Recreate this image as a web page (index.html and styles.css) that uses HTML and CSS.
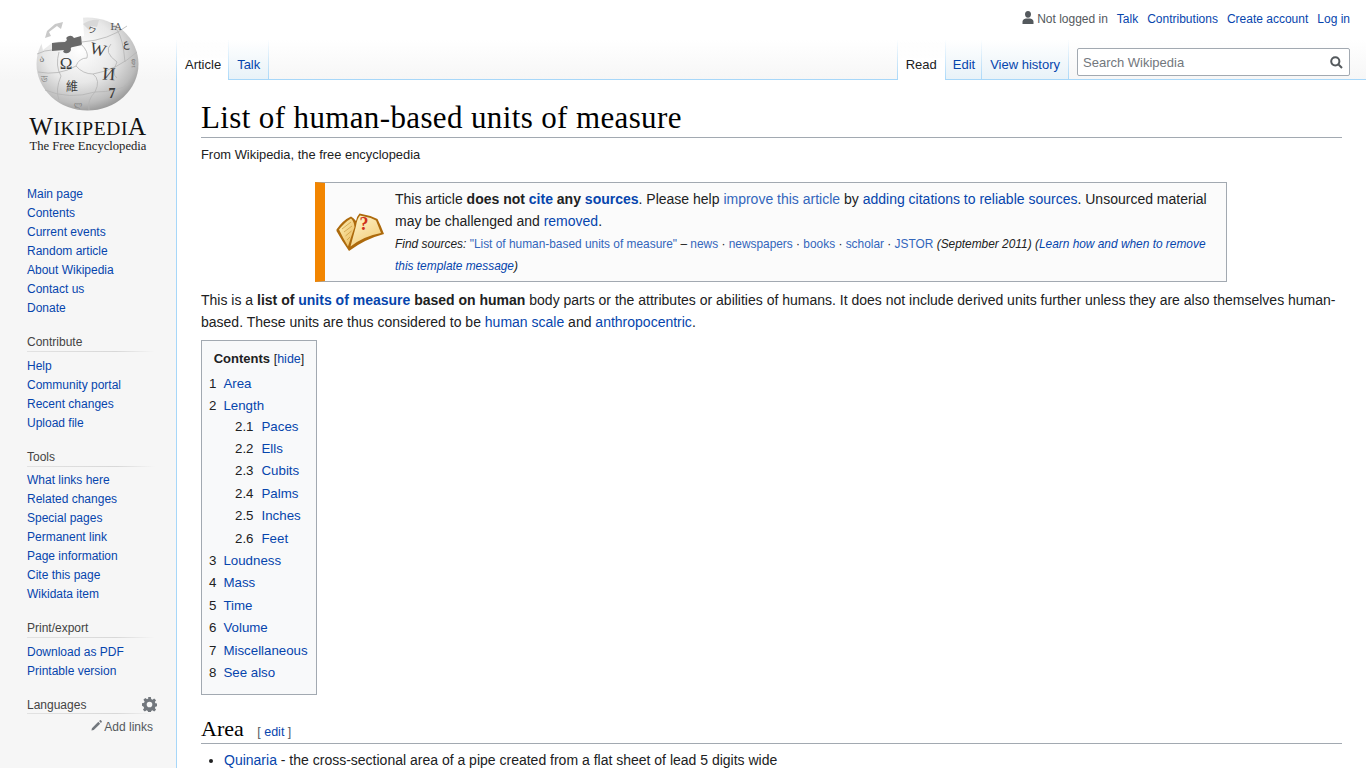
FILE: index.html
```html
<!DOCTYPE html>
<html lang="en">
<head>
    <meta charset="utf-8" />
    <title>List of human-based units of measure - Wikipedia</title>
    <link rel="stylesheet" href="styles.css">
</head>
<body>
<div class="page">
    <aside class="sidebar">
        <div class="logo">
            <svg class="globe" viewBox="37 17 104 94" width="104" height="94">
                <defs>
                    <radialGradient id="sphere" cx="42%" cy="35%" r="70%">
                        <stop offset="0" stop-color="#ffffff"/>
                        <stop offset="0.5" stop-color="#e8e8e8"/>
                        <stop offset="0.82" stop-color="#bcbcbc"/>
                        <stop offset="1" stop-color="#8e8e8e"/>
                    </radialGradient>
                </defs>
                <ellipse cx="88.500" cy="64" rx="51" ry="46.500" fill="url(#sphere)"/>
                <path d="M42 42 Q48 30 66 18 L84 17 L85 36 L53 43 L44 50Z" fill="#ffffff"/>
                <path d="M46 38 L52 36 L50 32 L58 26 L62 29 L64 22 L56 24 L48 31Z" fill="#c9c9c9"/>
                <path d="M84 24 Q92 19 100 20 L98 27 L92 26 L90 30Z" fill="#d8d8d8"/>
                <path d="M53 43 Q60 42 66 42 L68 40 Q66 37 70 36 Q73 35 75 38 L82 36 L83 45 L74 47 Q71 47 72 50 Q70 54 66 53 Q63 52 65 50 L53 51Z" fill="#6a6a6a"/>
                <g fill="none" stroke="#b4b4b4" stroke-width="0.8">
                    <path d="M38 54 Q46 50 53 50 M83 42 Q110 40 128 26"/>
                    <path d="M82 44 Q90 52 88 58 Q80 58 77 66 Q84 74 94 74 Q102 80 96 92 Q88 100 90 110"/>
                    <path d="M39 72 Q60 76 77 66 M94 74 Q118 70 138 52"/>
                    <path d="M60 52 Q56 66 62 76 Q56 90 60 100 M46 90 Q70 100 96 92 Q118 92 130 84"/>
                    <path d="M112 44 Q104 52 118 62 Q112 74 118 78 M118 30 Q124 38 126 62"/>
                </g>
                <g class="glyphs" fill="#3c3c3c" text-anchor="middle">
                    <text x="67" y="69" font-size="17">Ω</text>
                    <text x="99" y="55" font-size="17" transform="rotate(14 99 50)">W</text>
                    <text x="110" y="80" font-size="18" transform="rotate(4 110 73)">И</text>
                    <text class="glyph-cjk" x="73" y="91" font-size="12">維</text>
                    <text x="113" y="98" font-size="14" font-weight="bold">7</text>
                    <text class="glyph-cjk" x="93" y="33" font-size="8" transform="rotate(20 93 30)">ワ</text>
                    <text x="117" y="30" font-size="10" fill="#555">Ꙗ</text>
                    <text x="127" y="47" font-size="11">ع</text>
                    <text x="134" y="65" font-size="9" fill="#888">ฐ</text>
                    <text x="43" y="62" font-size="9" fill="#777">ა</text>
                    <text x="45" y="82" font-size="9" fill="#777">ড</text>
                    <text x="79" y="107" font-size="8" fill="#888">ლ</text>
                </g>
            </svg>
            <div class="wordmark">W<span class="wm-small">IKIPEDI</span>A</div>
            <div class="tagline">The Free Encyclopedia</div>
        </div>

        <nav class="portal portal-first">
            <a href="#">Main page</a>
            <a href="#">Contents</a>
            <a href="#">Current events</a>
            <a href="#">Random article</a>
            <a href="#">About Wikipedia</a>
            <a href="#">Contact us</a>
            <a href="#">Donate</a>
        </nav>
        <nav class="portal">
            <h3>Contribute</h3>
            <a href="#">Help</a>
            <a href="#">Community portal</a>
            <a href="#">Recent changes</a>
            <a href="#">Upload file</a>
        </nav>
        <nav class="portal portal-tools">
            <h3>Tools</h3>
            <a href="#">What links here</a>
            <a href="#">Related changes</a>
            <a href="#">Special pages</a>
            <a href="#">Permanent link</a>
            <a href="#">Page information</a>
            <a href="#">Cite this page</a>
            <a href="#">Wikidata item</a>
        </nav>
        <nav class="portal portal-print">
            <h3>Print/export</h3>
            <a href="#">Download as PDF</a>
            <a href="#">Printable version</a>
        </nav>
        <nav class="portal">
            <h3 class="lang-head">Languages
                <svg class="gear" viewBox="0 0 16 16" width="15" height="15">
                    <path fill="#72777d" fill-rule="evenodd" d="M6.600 0h2.800l.4 2.200 1.300.6 1.900-1.300 2 2-1.300 1.900.6 1.300 2.200.4v2.800l-2.200.4-.6 1.300 1.300 1.900-2 2-1.900-1.300-1.300.6-.4 2.200H6.600l-.4-2.200-1.300-.6-1.900 1.300-2-2 1.300-1.900-.6-1.300L0 9.400V6.600l2.200-.4.6-1.300-1.300-1.900 2-2 1.900 1.300 1.300-.6zM8 5a3 3 0 1 0 0 6 3 3 0 0 0 0-6z"/>
                </svg>
            </h3>
            <div class="add-links">
                <svg viewBox="0 0 12 12" width="11" height="11">
                    <path fill="#72777d" d="M1 9 L0.500 11.500 L3 11 L10 4 L8 2Z M8.800 1.200 L10.800 3.200 L11.800 2.200 Q12 1.700 11.600 1.200 L10.800 0.400 Q10.300 0 9.800 0.200Z"/>
                </svg>
                Add links
            </div>
        </nav>
    </aside>

    <div class="main">
        <header class="head">
            <div class="personal">
                <svg viewBox="0 0 12 13" width="12" height="13">
                    <path fill="#54595d" d="M6 0 C8 0 9 1.500 9 3.300 C9 5 8 6.800 6 6.800 C4 6.800 3 5 3 3.300 C3 1.500 4 0 6 0Z M0.500 13 L0.500 10.500 C0.500 8.500 3 7.800 4 7.500 L8 7.500 C9 7.800 11.500 8.500 11.500 10.500 L11.500 13Z"/>
                </svg>
                <span class="anon">Not logged in</span>
                <a href="#">Talk</a>
                <a href="#">Contributions</a>
                <a href="#">Create account</a>
                <a href="#">Log in</a>
            </div>
            <div class="tabbar">
                <div class="tabs">
                    <a class="tab selected tab-article" href="#">Article</a>
                    <a class="tab" href="#">Talk</a>
                </div>
                <div class="tabs-right">
                    <div class="tabs">
                        <a class="tab selected tab-read" href="#">Read</a>
                        <a class="tab tab-edit" href="#">Edit</a>
                        <a class="tab" href="#">View history</a>
                    </div>
                    <div class="search">
                        <span>Search Wikipedia</span>
                        <svg viewBox="0 0 13 13" width="13" height="13">
                            <path fill="none" stroke="#54595d" stroke-width="2" d="M5.300 1.200a4.100 4.100 0 1 0 0 8.200 4.100 4.100 0 0 0 0-8.200zM8.300 8.300L12 12"/>
                        </svg>
                    </div>
                </div>
            </div>
        </header>

        <main class="content">
            <h1>List of human-based units of measure</h1>
            <div class="sitesub">From Wikipedia, the free encyclopedia</div>

            <div class="notice">
                <svg class="book" viewBox="336 212 48 38" width="48" height="38">
                    <defs>
                        <linearGradient id="page-left" x1="0" y1="0" x2="1" y2="1">
                            <stop offset="0" stop-color="#fdf0b8"/>
                            <stop offset="1" stop-color="#eab95a"/>
                        </linearGradient>
                        <linearGradient id="page-right" x1="0" y1="0" x2="0.600" y2="1">
                            <stop offset="0" stop-color="#fff6cf"/>
                            <stop offset="1" stop-color="#f3cf7e"/>
                        </linearGradient>
                    </defs>
                    <path fill="#ad6a0c" d="M336.500 228.500 Q343 219 351 215.500 Q354 217 356 220 Q357 215 359.500 212.500 Q369 214 377.500 218 Q381 225 384 233 Q365 238 349 250 Q342 240 336.500 230Z"/>
                    <path fill="url(#page-left)" d="M339 228.500 Q345 221 351 217.500 Q354 220 354.500 226 Q351 236 348 245.500 Q343 237 339 228.500Z"/>
                    <path fill="url(#page-right)" d="M356 225 Q357 218 360 214.500 Q369 216 376 219.500 L381 232 Q364 235 350.500 245.500Z"/>
                    <path fill="none" stroke="#c9983c" stroke-width="0.7" d="M342 228 L351 221 M344 231 L352 225 M345.500 235 L351.500 230 M347 239 L350 236"/>
                    <text class="book-mark" x="364" y="229" font-size="18" fill="#d0301a" text-anchor="middle">?</text>
                </svg>
                <div class="notice-text">
                    This article <b>does not <a href="#">cite</a> any <a href="#">sources</a></b>. Please help <a class="ext" href="#">improve this article</a> by <a href="#">adding citations to reliable sources</a>. Unsourced material may be challenged and <a href="#">removed</a>.
                    <div class="notice-small">
                        <i>Find sources:</i> <a class="ext" href="#">"List of human-based units of measure"</a> – <a class="ext" href="#">news</a> · <a class="ext" href="#">newspapers</a> · <a class="ext" href="#">books</a> · <a class="ext" href="#">scholar</a> · <a class="ext" href="#">JSTOR</a> <i>(September 2011)</i> <i>(<a href="#">Learn how and when to remove this template message</a>)</i>
                    </div>
                </div>
            </div>

            <p>This is a <b>list of <a href="#">units of measure</a> based on human</b> body parts or the attributes or abilities of humans. It does not include derived units further unless they are also themselves human-based. These units are thus considered to be <a href="#">human scale</a> and <a href="#">anthropocentric</a>.</p>

            <div class="toc">
                <div class="toc-title"><b>Contents</b> <span class="toc-hide">[<a href="#">hide</a>]</span></div>
                <ul>
                    <li><span class="num">1</span><a href="#">Area</a></li>
                    <li><span class="num">2</span><a href="#">Length</a>
                        <ul>
                            <li><span class="num">2.1</span><a href="#">Paces</a></li>
                            <li><span class="num">2.2</span><a href="#">Ells</a></li>
                            <li><span class="num">2.3</span><a href="#">Cubits</a></li>
                            <li><span class="num">2.4</span><a href="#">Palms</a></li>
                            <li><span class="num">2.5</span><a href="#">Inches</a></li>
                            <li><span class="num">2.6</span><a href="#">Feet</a></li>
                        </ul>
                    </li>
                    <li><span class="num">3</span><a href="#">Loudness</a></li>
                    <li><span class="num">4</span><a href="#">Mass</a></li>
                    <li><span class="num">5</span><a href="#">Time</a></li>
                    <li><span class="num">6</span><a href="#">Volume</a></li>
                    <li><span class="num">7</span><a href="#">Miscellaneous</a></li>
                    <li><span class="num">8</span><a href="#">See also</a></li>
                </ul>
            </div>

            <h2>Area <span class="editsection">[ <a href="#">edit</a> ]</span></h2>
            <ul class="bullets">
                <li><a href="#">Quinaria</a> - the cross-sectional area of a pipe created from a flat sheet of lead 5 digits wide</li>
            </ul>
        </main>
    </div>
</div>
</body>
</html>
```

FILE: styles.css
```css
html, body {
    margin: 0;
    height: 768px;
    overflow: hidden;
}

body {
    font-family: "Liberation Sans", Arial, sans-serif;
    color: #202122;
    background-color: #f6f6f6;
    background-image: linear-gradient(#ffffff 40px, #f6f6f6 80px);
    background-repeat: no-repeat;
}

a {
    color: #0645ad;
    text-decoration: none;
}

a.ext {
    color: #3366bb;
}

.page {
    display: grid;
    grid-template-columns: 176px 1fr;
}

/* left column */
.logo {
    height: 160px;
    box-sizing: border-box;
    padding-top: 17px;
    display: flex;
    flex-direction: column;
    align-items: center;
}

.globe text {
    font-family: "Liberation Serif", "DejaVu Serif", serif;
}

.globe .glyph-cjk {
    font-family: "Noto Sans CJK TC", serif;
}

.wordmark {
    margin-top: 3px;
    font-family: "Liberation Serif", serif;
    font-size: 25px;
    line-height: 26px;
    letter-spacing: 0.6px;
    color: #111111;
}

.wm-small {
    font-size: 19.500px;
}

.tagline {
    font-family: "Liberation Serif", serif;
    font-size: 12.6px;
    line-height: 14px;
    margin-top: -3px;
    color: #222222;
}

.portal {
    padding-left: 27px;
    padding-right: 21px;
    margin-bottom: 15px;
}

.portal-first {
    margin-top: 25px;
}

.portal-print {
    margin-bottom: 14px;
}

.portal h3 {
    margin: 0 0 5px;
    height: 19px;
    font-size: 12px;
    font-weight: normal;
    line-height: 18px;
    color: #444444;
    background-image: linear-gradient(to right, #e2e2e2, #d8d8d8 70%, #f6f6f6);
    background-size: 100% 1px;
    background-position: bottom;
    background-repeat: no-repeat;
}

.portal-tools h3 {
    margin-bottom: 4px;
}

.portal a {
    display: block;
    font-size: 12px;
    line-height: 19px;
}

.lang-head {
    display: flex;
    justify-content: space-between;
    align-items: center;
}

.gear {
    margin-right: -2px;
}

.add-links {
    font-size: 12px;
    line-height: 14px;
    text-align: right;
    color: #54595d;
    margin-right: 2px;
    margin-top: 6px;
}

/* header */
.head {
    height: 80px;
    display: flex;
    flex-direction: column;
}

.personal {
    height: 40px;
    display: flex;
    justify-content: flex-end;
    gap: 9px;
    padding: 12px 16px 0 0;
    box-sizing: border-box;
    font-size: 12px;
    line-height: 15px;
}

.personal svg {
    margin: -1px -6px 0 0;
}

.anon {
    color: #54595d;
}

.tabbar {
    height: 40px;
    display: flex;
    justify-content: space-between;
    background: linear-gradient(#a7d7f9, #a7d7f9) bottom / 100% 1px no-repeat;
}

.tabs {
    display: flex;
    height: 40px;
    box-sizing: border-box;
    border-left: 1px solid;
    border-image: linear-gradient(rgba(167, 215, 249, 0), #a7d7f9) 1;
}

.tab {
    font-size: 13px;
    line-height: 50px;
    padding: 0 8px;
    border-right: 1px solid;
    border-image: linear-gradient(rgba(167, 215, 249, 0), #a7d7f9) 1;
    background: linear-gradient(#ffffff, #e8f2f8) top / 100% 39px no-repeat;
}

.tab.selected {
    color: #202122;
    background: linear-gradient(rgba(255, 255, 255, 0), #ffffff 50%);
}

.tab-article {
    padding-right: 7px;
}

.tab-read {
    padding-right: 8px;
}

.tab-edit {
    padding: 0 6px 0 7px;
}

.tabs-right {
    display: flex;
    gap: 8px;
    padding-right: 16px;
    flex: 1;
    justify-content: flex-end;
    height: 40px;
    box-sizing: border-box;
}

.search {
    width: 273px;
    height: 28px;
    margin-top: 8px;
    box-sizing: border-box;
    border: 1px solid #a2a9b1;
    border-radius: 2px;
    background-color: #ffffff;
    display: flex;
    justify-content: space-between;
    align-items: center;
    padding: 0 6px 0 5px;
    font-size: 13px;
    color: #72777d;
}

/* article */
.content {
    box-sizing: border-box;
    background-color: #ffffff;
    border-left: 1px solid #a7d7f9;
    padding: 20px 24px 0 24px;
    height: 688px;
    font-size: 14px;
    line-height: 22.4px;
}

h1 {
    margin: 0;
    font-family: "Liberation Serif", Georgia, serif;
    font-size: 31px;
    letter-spacing: 0.37px;
    font-weight: normal;
    line-height: 36px;
    padding-bottom: 1px;
    border-bottom: 1px solid #a2a9b1;
    color: #000000;
}

.sitesub {
    font-size: 12.9px;
    line-height: 18px;
    margin-top: 8px;
}

.notice {
    display: flex;
    align-items: flex-start;
    width: 912px;
    height: 100px;
    box-sizing: border-box;
    margin: 18px 0 0 114px;
    border: 1px solid #a2a9b1;
    border-left: 10px solid #f28500;
    background-color: #fbfbfb;
}

.book {
    flex: none;
    align-self: center;
    margin: 0 11px 0 11px;
}

.book-mark {
    font-family: "Liberation Serif", serif;
    font-weight: bold;
}

.notice-text {
    flex: 1;
    line-height: 22px;
    padding: 5px 9px 0 0;
}

.notice-small {
    font-size: 11.9px;
    margin-top: 1px;
}

p {
    margin: 7px 0 0;
}

.toc {
    width: 116px;
    height: 355px;
    box-sizing: border-box;
    margin-top: 6px;
    border: 1px solid #a2a9b1;
    background-color: #f8f9fa;
    padding: 7px;
    font-size: 13.3px;
}

.toc-title {
    text-align: center;
    font-size: 13px;
    line-height: 22px;
    white-space: nowrap;
}

.toc-hide {
    font-size: 12.500px;
}

.toc ul {
    list-style: none;
    margin: 3px 0 0;
    padding: 0;
}

.toc ul ul {
    margin: -2px 0 0 26px;
}

.toc li {
    white-space: nowrap;
}

.num {
    padding-right: 7px;
}

.toc ul ul .num {
    padding-right: 8px;
}

h2 {
    margin: 23px 0 0;
    font-family: "Liberation Serif", Georgia, serif;
    font-size: 22px;
    font-weight: normal;
    line-height: 22px;
    color: #000000;
    border-bottom: 1px solid #a2a9b1;
}

.editsection {
    font-family: "Liberation Sans", Arial, sans-serif;
    font-size: 12.5px;
    color: #54595d;
    margin-left: 8px;
}

.bullets {
    margin: 5px 0 0 23px;
    padding: 0;
}
```
